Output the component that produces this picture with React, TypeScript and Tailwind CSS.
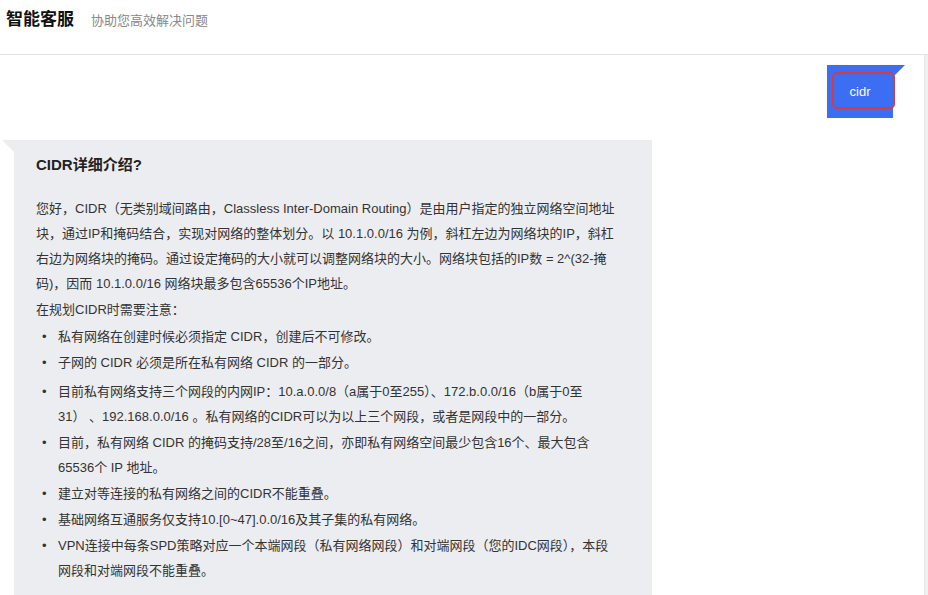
import React from 'react'

const font = { fontFamily: '"Liberation Sans", "Noto Sans CJK SC", sans-serif' }

const notes: string[][] = [
  ['私有网络在创建时候必须指定 CIDR，创建后不可修改。'],
  ['子网的 CIDR 必须是所在私有网络 CIDR 的一部分。'],
  [
    '目前私有网络支持三个网段的内网IP：10.a.0.0/8（a属于0至255）、172.b.0.0/16（b属于0至',
    '31） 、192.168.0.0/16 。私有网络的CIDR可以为以上三个网段，或者是网段中的一部分。',
  ],
  [
    '目前，私有网络 CIDR 的掩码支持/28至/16之间，亦即私有网络空间最少包含16个、最大包含',
    '65536个 IP 地址。',
  ],
  ['建立对等连接的私有网络之间的CIDR不能重叠。'],
  ['基础网络互通服务仅支持10.[0~47].0.0/16及其子集的私有网络。'],
  [
    'VPN连接中每条SPD策略对应一个本端网段（私有网络网段）和对端网段（您的IDC网段），本段',
    '网段和对端网段不能重叠。',
  ],
]

const intro = [
  '您好，CIDR（无类别域间路由，Classless Inter-Domain Routing）是由用户指定的独立网络空间地址',
  '块，通过IP和掩码结合，实现对网络的整体划分。以 10.1.0.0/16 为例，斜杠左边为网络块的IP，斜杠',
  '右边为网络块的掩码。通过设定掩码的大小就可以调整网络块的大小。网络块包括的IP数 = 2^(32-掩',
  '码)，因而 10.1.0.0/16 网络块最多包含65536个IP地址。',
]

export default function App() {
  return (
    <div className="h-[595px] overflow-hidden bg-white text-[#333]" style={font}>
      {/* Header */}
      <div className="h-[55px] border-b border-[#e3e3e3] flex items-baseline gap-[17px] px-[6px] pt-[8px]">
        <h1 className="text-[17px] leading-[24px] font-bold text-[#111]">智能客服</h1>
        <span className="text-[13px] text-[#888]">协助您高效解决问题</span>
      </div>

      <div className="flex h-[540px]">
        <div className="flex-1 pt-[10px]">
          {/* User message */}
          <div className="flex justify-end pr-[31px]">
            <div className="relative w-[66px] h-[53px] bg-[#3b6ef2] flex items-center justify-center">
              <span className="text-white text-[13px]">cidr</span>
              <div className="absolute left-full top-0 w-0 h-0 border-t-[12px] border-t-[#3b6ef2] border-r-[12px] border-r-transparent" />
              <div className="absolute left-[5px] top-[7px] w-[63px] h-[37px] border-2 border-[#d83b3b] rounded-[5px]" />
            </div>
          </div>

          {/* Bot message */}
          <div className="relative mt-[22px] ml-[14px] w-[638px] bg-[#ecedf0] pl-[22px] pr-[16px] pt-[14px] pb-[20px]">
            <div className="absolute right-full top-0 w-0 h-0 border-t-[12px] border-t-[#ecedf0] border-l-[12px] border-l-transparent" />
            <h2 className="text-[15px] leading-[22px] font-bold text-[#222]">CIDR详细介绍?</h2>
            <div className="mt-[20px] text-[13px] leading-[25px]">
              {intro.map((line, i) => (
                <div key={i} className="whitespace-nowrap">{line}</div>
              ))}
              <div className="mt-[1px]">在规划CIDR时需要注意：</div>
              <ul className="mt-[2px]">
                {notes.map((item, i) => (
                  <li key={i} className={i === 2 ? 'flex mb-[1px] mt-[4px]' : 'flex mb-[1px]'}>
                    <span className="w-[22px] shrink-0 pl-[6px]">•</span>
                    <span>
                      {item.map((line, j) => (
                        <div key={j} className="whitespace-nowrap">{line}</div>
                      ))}
                    </span>
                  </li>
                ))}
              </ul>
            </div>
          </div>
        </div>
        {/* Scroll track */}
        <div className="w-[4px] bg-[#f0f0f0] border-l border-[#e6e6e6]" />
      </div>
    </div>
  )
}
